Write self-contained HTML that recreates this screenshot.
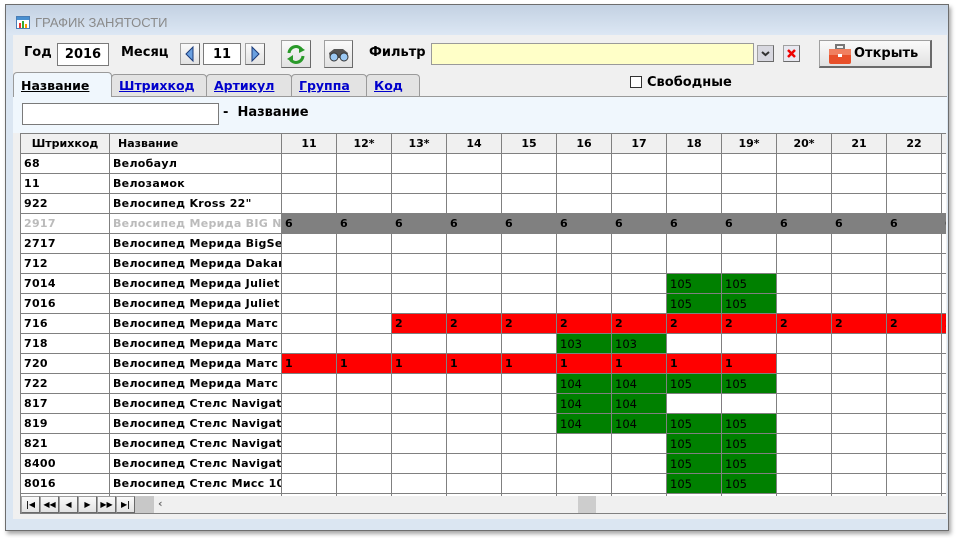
<!DOCTYPE html>
<html><head><meta charset="utf-8"><style>
*{box-sizing:border-box;margin:0;padding:0}
body{width:957px;height:538px;background:#fff;position:relative;overflow:hidden;font-family:"DejaVu Sans","Liberation Sans",sans-serif;font-size:11px;font-weight:bold;color:#000}
.a{position:absolute}
#win{left:5px;top:4px;width:944px;height:527px;border:1px solid #6d6d6d;background:#dbe6f2;box-shadow:2px 3px 4px rgba(0,0,0,.35)}
#title{left:6px;top:5px;width:942px;height:30px;background:linear-gradient(#c3d1e2,#dce7f4)}
#content{left:13px;top:35px;width:934px;height:484px;background:#f0f0f0}
.inp{background:#fff;border:1px solid #7a7a7a}
.btn{background:linear-gradient(#fafafa,#e2e2e2);border:1px solid #a0a0a0;border-right-color:#6a6a6a;border-bottom-color:#6a6a6a}
.tab{top:74px;height:22px;border:1px solid #9a9a9a;border-bottom:none;border-radius:4px 4px 0 0;background:#e3e3e3;color:#00c;text-decoration:underline;font-size:12.5px;padding:3px 0 0 7px}
#grid{left:20px;top:133px;width:926px;height:363px;overflow:hidden;background:#fff}
table{border-collapse:collapse;table-layout:fixed;width:976px}
td{border:1px solid #808080;height:20px;padding:0 0 0 3px;white-space:nowrap;overflow:hidden;font-size:11px;letter-spacing:.3px}
tr.h td{background:#f0f0f0;height:20px;text-align:center;padding:0;letter-spacing:0}
tr.h td.l{text-align:left;padding-left:8px}
.r{background:#f00}.g{background:#008000;font-weight:normal;font-size:11.5px;letter-spacing:0}.k{background:#808080;border-color:#808080}
.dim td{color:#bbb}
</style></head><body>
<div id="win" class="a"></div>
<div id="title" class="a"></div>
<svg class="a" style="left:16px;top:16px" width="14" height="13"><rect x=".5" y=".5" width="13" height="12" fill="#fff" stroke="#4a7db5"/><rect x="1" y="1" width="12" height="3" fill="#4a90d0"/><rect x="3" y="7" width="2" height="5" fill="#e33"/><rect x="6" y="5" width="2" height="7" fill="#3a3"/><rect x="9" y="8" width="2" height="4" fill="#f90"/></svg>
<div class="a" style="left:35px;top:15px;font-weight:normal;font-size:13px;color:#8a8a8a;font-family:'Liberation Sans',sans-serif">ГРАФИК ЗАНЯТОСТИ</div>
<div id="content" class="a"></div>
<div class="a" style="left:24px;top:45px;font-size:13px">Год</div>
<div class="a inp" style="left:57px;top:43px;width:52px;height:23px;font-size:13px;text-align:center;padding-top:3px">2016</div>
<div class="a" style="left:121px;top:45px;font-size:13px">Месяц</div>
<div class="a btn" style="left:180px;top:43px;width:20px;height:22px"><svg width="18" height="20"><path d="M12 3 L5 10 L12 17Z" fill="#6aa0e0" stroke="#1a3a7a"/></svg></div>
<div class="a inp" style="left:203px;top:43px;width:38px;height:22px;font-size:13px;text-align:center;padding-top:3px">11</div>
<div class="a btn" style="left:245px;top:43px;width:20px;height:22px"><svg width="18" height="20"><path d="M6 3 L13 10 L6 17Z" fill="#6aa0e0" stroke="#1a3a7a"/></svg></div>
<div class="a btn" style="left:281px;top:40px;width:30px;height:28px"><svg width="28" height="26"><path d="M7 12 A7 7 0 0 1 20 9" fill="none" stroke="#2a9a2a" stroke-width="3"/><path d="M17 5 L23 9 L17 12Z" fill="#2a9a2a"/><path d="M21 15 A7 7 0 0 1 8 18" fill="none" stroke="#2a9a2a" stroke-width="3"/><path d="M11 14 L5 18 L11 21Z" fill="#2a9a2a"/></svg></div>
<div class="a btn" style="left:324px;top:40px;width:29px;height:28px"><svg width="27" height="26"><path d="M4 12 L9 8 L18 8 L23 12 L22 17 L5 17Z" fill="#555"/><circle cx="9" cy="16" r="4" fill="#9ccaf5" stroke="#333"/><circle cx="19" cy="16" r="4" fill="#9ccaf5" stroke="#333"/></svg></div>
<div class="a" style="left:369px;top:45px;font-size:13px">Фильтр</div>
<div class="a" style="left:431px;top:43px;width:323px;height:22px;background:#ffffc8;border:1px solid #9a9a9a"></div>
<div class="a btn" style="left:757px;top:45px;width:17px;height:17px;background:#d8d8e0"><svg width="15" height="15"><path d="M4 6 L7.5 9 L11 6" fill="none" stroke="#333" stroke-width="2"/></svg></div>
<div class="a btn" style="left:783px;top:45px;width:17px;height:17px;background:#e8e8f0"><svg width="15" height="15"><path d="M4 4 L11 11 M11 4 L4 11" stroke="#e00" stroke-width="2.5"/></svg></div>
<div class="a btn" style="left:819px;top:40px;width:113px;height:28px;border-width:1px 2px 2px 1px"><svg class="a" style="left:8px;top:3px" width="24" height="21"><rect x="8" y="1" width="8" height="4" fill="none" stroke="#777" stroke-width="2"/><rect x="1" y="5" width="22" height="15" rx="2" fill="#e8502a"/><rect x="1" y="5" width="22" height="6" fill="#f08060"/><rect x="10" y="10" width="4" height="3" fill="#fff"/></svg><span class="a" style="left:34px;top:5px;font-size:13px">Открыть</span></div>
<div class="a" style="left:13px;top:96px;width:934px;height:37px;background:#f0f7fd;border-top:1px solid #9a9a9a"></div>
<div class="a tab" style="left:13px;top:72px;width:99px;height:25px;background:#f0f7fd;color:#000;z-index:2;padding-top:5px">Название</div>
<div class="a tab" style="left:111px;width:96px">Штрихкод</div>
<div class="a tab" style="left:206px;width:86px">Артикул</div>
<div class="a tab" style="left:291px;width:76px">Группа</div>
<div class="a tab" style="left:366px;width:54px">Код</div>
<div class="a" style="left:630px;top:76px;width:12px;height:12px;border:1px solid #333;background:#fff"></div>
<div class="a" style="left:647px;top:75px;font-size:13px">Свободные</div>
<div class="a inp" style="left:22px;top:103px;width:197px;height:22px"></div>
<div class="a" style="left:223px;top:105px;font-size:13px">-&nbsp; Название</div>
<div id="grid" class="a"><table>
<colgroup><col style="width:89px"><col style="width:172px"><col span="13" style="width:55px"></colgroup>
<tr class="h"><td>Штрихкод</td><td class="l">Название</td><td>11</td><td>12*</td><td>13*</td><td>14</td><td>15</td><td>16</td><td>17</td><td>18</td><td>19*</td><td>20*</td><td>21</td><td>22</td><td></td></tr>
<tr><td>68</td><td>Велобаул</td><td></td><td></td><td></td><td></td><td></td><td></td><td></td><td></td><td></td><td></td><td></td><td></td><td></td></tr>
<tr><td>11</td><td>Велозамок</td><td></td><td></td><td></td><td></td><td></td><td></td><td></td><td></td><td></td><td></td><td></td><td></td><td></td></tr>
<tr><td>922</td><td>Велосипед Kross 22"</td><td></td><td></td><td></td><td></td><td></td><td></td><td></td><td></td><td></td><td></td><td></td><td></td><td></td></tr>
<tr class="dim"><td>2917</td><td>Велосипед Мерида BIG Nine</td><td class="k" style="color:#000">6</td><td class="k" style="color:#000">6</td><td class="k" style="color:#000">6</td><td class="k" style="color:#000">6</td><td class="k" style="color:#000">6</td><td class="k" style="color:#000">6</td><td class="k" style="color:#000">6</td><td class="k" style="color:#000">6</td><td class="k" style="color:#000">6</td><td class="k" style="color:#000">6</td><td class="k" style="color:#000">6</td><td class="k" style="color:#000">6</td><td class="k" style="color:#000">6</td></tr>
<tr><td>2717</td><td>Велосипед Мерида BigSeven</td><td></td><td></td><td></td><td></td><td></td><td></td><td></td><td></td><td></td><td></td><td></td><td></td><td></td></tr>
<tr><td>712</td><td>Велосипед Мерида Dakar</td><td></td><td></td><td></td><td></td><td></td><td></td><td></td><td></td><td></td><td></td><td></td><td></td><td></td></tr>
<tr><td>7014</td><td>Велосипед Мерида Juliet</td><td></td><td></td><td></td><td></td><td></td><td></td><td></td><td class="g">105</td><td class="g">105</td><td></td><td></td><td></td><td></td></tr>
<tr><td>7016</td><td>Велосипед Мерида Juliet</td><td></td><td></td><td></td><td></td><td></td><td></td><td></td><td class="g">105</td><td class="g">105</td><td></td><td></td><td></td><td></td></tr>
<tr><td>716</td><td>Велосипед Мерида Матс</td><td></td><td></td><td class="r">2</td><td class="r">2</td><td class="r">2</td><td class="r">2</td><td class="r">2</td><td class="r">2</td><td class="r">2</td><td class="r">2</td><td class="r">2</td><td class="r">2</td><td class="r">2</td></tr>
<tr><td>718</td><td>Велосипед Мерида Матс</td><td></td><td></td><td></td><td></td><td></td><td class="g">103</td><td class="g">103</td><td></td><td></td><td></td><td></td><td></td><td></td></tr>
<tr><td>720</td><td>Велосипед Мерида Матс</td><td class="r">1</td><td class="r">1</td><td class="r">1</td><td class="r">1</td><td class="r">1</td><td class="r">1</td><td class="r">1</td><td class="r">1</td><td class="r">1</td><td></td><td></td><td></td><td></td></tr>
<tr><td>722</td><td>Велосипед Мерида Матс</td><td></td><td></td><td></td><td></td><td></td><td class="g">104</td><td class="g">104</td><td class="g">105</td><td class="g">105</td><td></td><td></td><td></td><td></td></tr>
<tr><td>817</td><td>Велосипед Стелс Navigator</td><td></td><td></td><td></td><td></td><td></td><td class="g">104</td><td class="g">104</td><td></td><td></td><td></td><td></td><td></td><td></td></tr>
<tr><td>819</td><td>Велосипед Стелс Navigator</td><td></td><td></td><td></td><td></td><td></td><td class="g">104</td><td class="g">104</td><td class="g">105</td><td class="g">105</td><td></td><td></td><td></td><td></td></tr>
<tr><td>821</td><td>Велосипед Стелс Navigator</td><td></td><td></td><td></td><td></td><td></td><td></td><td></td><td class="g">105</td><td class="g">105</td><td></td><td></td><td></td><td></td></tr>
<tr><td>8400</td><td>Велосипед Стелс Navigator</td><td></td><td></td><td></td><td></td><td></td><td></td><td></td><td class="g">105</td><td class="g">105</td><td></td><td></td><td></td><td></td></tr>
<tr><td>8016</td><td>Велосипед Стелс Мисс 1000</td><td></td><td></td><td></td><td></td><td></td><td></td><td></td><td class="g">105</td><td class="g">105</td><td></td><td></td><td></td><td></td></tr>
<tr><td></td><td></td><td></td><td></td><td></td><td></td><td></td><td></td><td></td><td></td><td></td><td></td><td></td><td></td><td></td></tr>
</table></div>
<div class="a" style="left:20px;top:496px;width:926px;height:18px;background:#f0f0f0;border-bottom:1px solid #808080;border-left:1px solid #808080"></div>
<div class="a" style="left:21px;top:496px;width:114px;height:17px;display:flex;font-size:8px;font-weight:bold">
<div class="btn" style="flex:1;text-align:center;padding-top:3px">|◀</div><div class="btn" style="flex:1;text-align:center;padding-top:3px">◀◀</div><div class="btn" style="flex:1;text-align:center;padding-top:3px">◀</div><div class="btn" style="flex:1;text-align:center;padding-top:3px">▶</div><div class="btn" style="flex:1;text-align:center;padding-top:3px">▶▶</div><div class="btn" style="flex:1;text-align:center;padding-top:3px">▶|</div></div>
<div class="a" style="left:135px;top:496px;width:19px;height:17px;background:#c8c8c8"></div>
<div class="a" style="left:158px;top:497px;font-size:11px;color:#666">‹</div>
<div class="a" style="left:578px;top:496px;width:18px;height:17px;background:#cdcdcd"></div>
</body></html>
